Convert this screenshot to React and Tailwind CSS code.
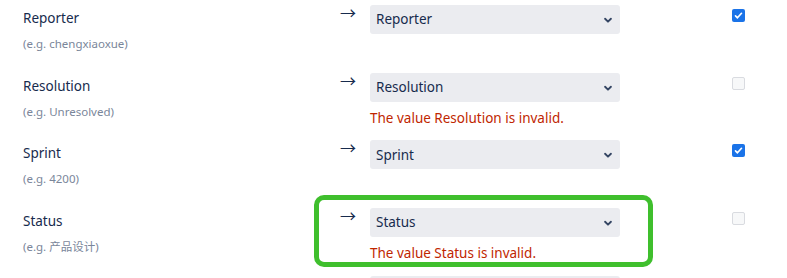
import React from 'react';

const rows = [
    { label: 'Reporter', hint: '(e.g. chengxiaoxue)', value: 'Reporter', checked: true },
    { label: 'Resolution', hint: '(e.g. Unresolved)', value: 'Resolution', checked: false, error: 'The value Resolution is invalid.' },
    { label: 'Sprint', hint: '(e.g. 4200)', value: 'Sprint', checked: true },
    { label: 'Status', hint: '(e.g. 产品设计)', value: 'Status', checked: false, error: 'The value Status is invalid.' },
];

const Chevron = () => (
    <svg width="10" height="10" viewBox="0 0 24 24" className="pointer-events-none absolute right-[7px] top-[10px]">
        <path d="M5 9l7 7 7-7" fill="none" stroke="#344563" strokeWidth="4.5" strokeLinecap="round" strokeLinejoin="round" />
    </svg>
);

const Check = ({ checked }) =>
    checked ? (
        <div className="flex h-[13px] w-[13px] items-center justify-center rounded-[2px] bg-[#1a73e8]">
            <svg width="9" height="9" viewBox="0 0 12 12">
                <path d="M2 6.5l2.6 2.6L10 3" fill="none" stroke="#fff" strokeWidth="2.2" strokeLinecap="round" strokeLinejoin="round" />
            </svg>
        </div>
    ) : (
        <div className="h-[13px] w-[13px] rounded-[2px] border border-[#d9dbe0] bg-[#f7f8f9]" />
    );

const FieldRow = ({ row }) => (
    <div className="flex h-[67.67px] items-start">
        <div className="w-[340px] shrink-0 pl-[23px] pt-[8px]">
            <div className="text-[13.5px] leading-[20px] text-[#172b4d]">{row.label}</div>
            <div className="mt-[8px] text-[11.5px] leading-[16px] text-[#7a869a]">{row.hint}</div>
        </div>
        <div className="w-[30px] shrink-0 pt-[3px] text-[16px] leading-[20px] text-[#172b4d]">→</div>
        <div className="w-[250px] shrink-0 pt-[5px]">
            <div className="relative">
                <select
                    defaultValue={row.value}
                    className="h-[29px] w-full appearance-none rounded-[3px] bg-[#ebecf0] pl-[6px] text-[13.5px] text-[#172b4d] outline-none"
                >
                    <option value={row.value}>{row.value}</option>
                </select>
                <Chevron />
            </div>
            {row.error && (
                <div className="mt-[6px] text-[13.5px] leading-[20px] text-[#bf2600]">{row.error}</div>
            )}
        </div>
        <div className="shrink-0 pl-[112px] pt-[9px]">
            <Check checked={row.checked} />
        </div>
    </div>
);

export default function App() {
    return (
        <div
            className="relative h-[278px] w-[787px] overflow-hidden bg-white"
            style={{ fontFamily: '"Noto Sans", "Noto Sans CJK SC", sans-serif' }}
        >
            {rows.map(r => <FieldRow key={r.label} row={r} />)}
            {/* next row, only the top of its select is in view */}
            <div className="flex pt-[5px]">
                <div className="ml-[370px] h-[29px] w-[250px] rounded-[3px] bg-[#ebecf0]" />
            </div>
            {/* annotation highlight */}
            <div className="pointer-events-none absolute left-[314px] top-[195px] h-[72px] w-[339px] rounded-[10px] border-[5px] border-[#3fbf2d]" />
        </div>
    );
}
